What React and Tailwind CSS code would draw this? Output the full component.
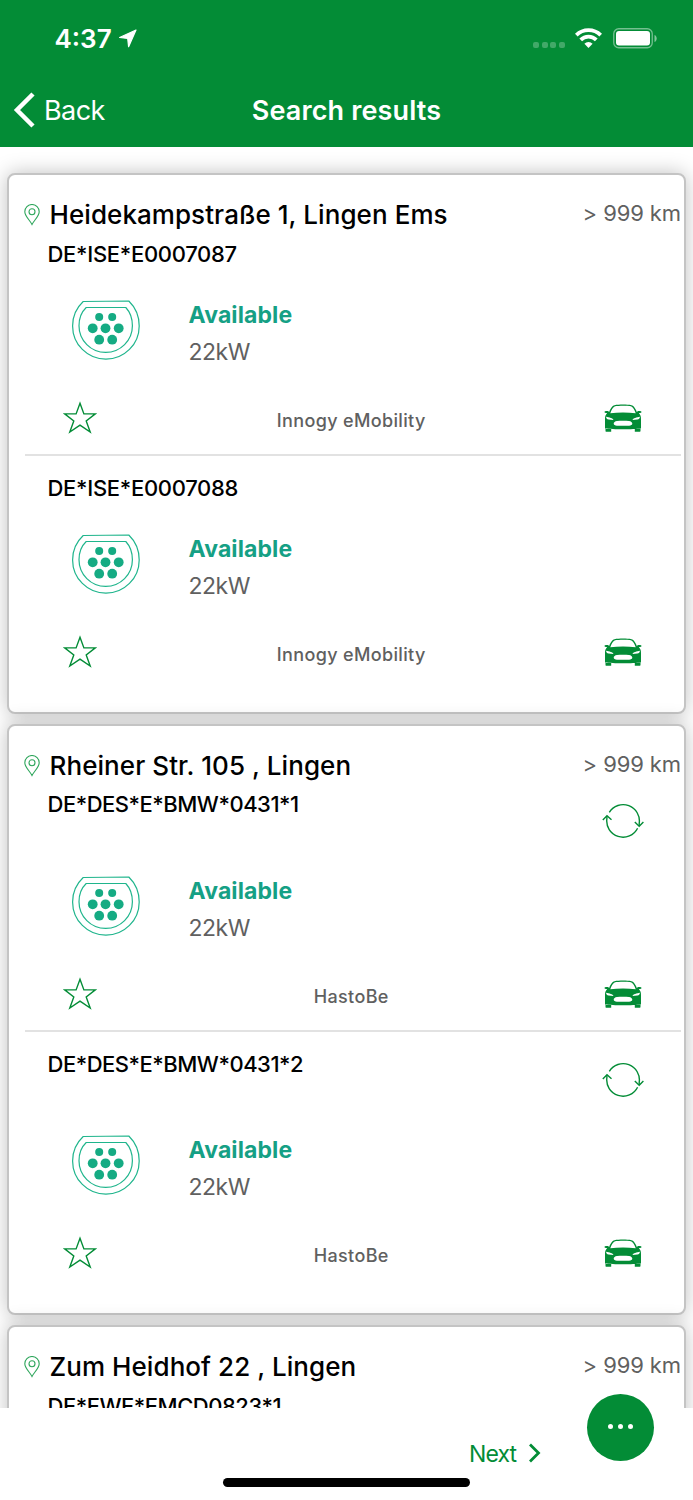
const locations = [
  {
    address: 'Heidekampstraße 1, Lingen Ems',
    distance: '> 999 km',
    stations: [
      { id: 'DE*ISE*E0007087', status: 'Available', power: '22kW', operator: 'Innogy eMobility' },
      { id: 'DE*ISE*E0007088', status: 'Available', power: '22kW', operator: 'Innogy eMobility' },
    ],
  },
  {
    address: 'Rheiner Str. 105 , Lingen',
    distance: '> 999 km',
    stations: [
      { id: 'DE*DES*E*BMW*0431*1', status: 'Available', power: '22kW', operator: 'HastoBe', roaming: true },
      { id: 'DE*DES*E*BMW*0431*2', status: 'Available', power: '22kW', operator: 'HastoBe', roaming: true },
    ],
  },
  {
    address: 'Zum Heidhof 22 , Lingen',
    distance: '> 999 km',
    stations: [{ id: 'DE*EWE*EMCD0823*1' }],
  },
];

function LocationArrow() {
  return (
    <svg width="18" height="19" viewBox="0 0 18 19" fill="#fff" stroke="#fff" strokeWidth="1.2" strokeLinejoin="round">
      <path d="M17 1 .6 8.500 8.700 9.500 9.600 17.700z" />
    </svg>
  );
}

function WifiIcon() {
  return (
    <svg width="27" height="20" viewBox="0 0 27 20" fill="none" stroke="#fff" strokeWidth="3.8">
      <path d="M1.3 7.1a17.3 17.3 0 0 1 24.4 0" />
      <path d="M5.7 11.8a11 11 0 0 1 15.6 0" />
      <path d="M13.5 20 9.4 15.8a5.8 5.8 0 0 1 8.2 0z" fill="#fff" stroke="none" />
    </svg>
  );
}

function BatteryIcon() {
  return (
    <svg width="44" height="21" viewBox="0 0 44 21" fill="none">
      <rect x="0.75" y="0.75" width="38.5" height="19" rx="5" stroke="#fff" strokeOpacity="0.45" strokeWidth="1.3" />
      <rect x="3" y="3" width="34" height="14.5" rx="3" fill="#fff" />
      <path d="M41.5 7v7c1.6-.6 2.2-2 2.2-3.5S43.1 7.6 41.5 7z" fill="#fff" fillOpacity="0.5" />
    </svg>
  );
}

function PinIcon() {
  return (
    <svg width="16" height="22" viewBox="0 0 16 22" fill="none" stroke="#2fa65c" strokeWidth="1.1">
      <path d="M8 20.500C6 16.500.8 12 .8 7.700a7.200 7.200 0 0 1 14.400 0C15.200 12 10 16.500 8 20.500z" />
      <circle cx="8" cy="7.700" r="3" />
    </svg>
  );
}

function PlugIcon() {
  return (
    <svg width="68" height="60" viewBox="0 0 68 60" fill="none" stroke="#1fb58c" strokeWidth="1.2">
      <path d="M11.200 1.500 56.800 1C63 7 67.200 15.500 67.200 25.900a33.300 33.300 0 0 1-66.600 0C.6 16 4.800 7.500 11.200 1.500z" />
      <path d="M14.200 7.500h39.600C58 12 60.400 18.500 60.400 25.700a26.700 26.700 0 0 1-53.400 0C7 18.500 9.500 12 14.200 7.500z" />
      <g fill="#15ab83" stroke="none">
        <circle cx="27.200" cy="17" r="4" />
        <circle cx="40.200" cy="17" r="4" />
        <circle cx="20.700" cy="28.300" r="4.900" />
        <circle cx="33.500" cy="28.300" r="4.900" />
        <circle cx="46.700" cy="28.300" r="4.900" />
        <circle cx="27.200" cy="39.700" r="4.900" />
        <circle cx="40.200" cy="39.700" r="4.900" />
      </g>
    </svg>
  );
}

function StarIcon() {
  return (
    <svg width="34" height="33" viewBox="0 0 34 33" fill="none" stroke="#038c36" strokeWidth="1.4">
      <path d="M17 2.200 20.900 12.900H32.300L23.200 19.900 27.200 31 17 24.100 6.800 31 10.800 19.900 1.700 12.900H13.100z" />
    </svg>
  );
}

function CarIcon() {
  return (
    <svg width="38" height="28" viewBox="0 0 38 28" fill="#038c36">
      <path
        fillRule="evenodd"
        d="M10.500 1.200C15 .4 23 .4 27.500 1.200c2.300.4 4.300 3.800 5.300 6.700l1.200-.8c1.500-.4 3.500-.1 3.500.9 0 .9-1.300 1.200-2.700 1.100 1.800 1.900 2.200 3.500 2.200 6v9.300c-8 1.100-28 1.100-36 0v-9.300c0-2.500.4-4.100 2.200-6C1.800 9.200.5 8.900.5 8c0-1 2-1.300 3.500-.9l1.200.8c1-2.900 3-6.300 5.300-6.700zM11 2.300C9 3 7.500 6 6.300 9.200c8-.8 17.400-.8 25.400 0C30.500 6 29 3 27 2.300c-4-.7-12-.7-16 0zM2 12.700c.3 1.500 1 2.600 2.600 2.900l4.800.3c-.3-1.700-4.200-2.600-7.400-3.200zm34 0c-3.200.6-7.100 1.500-7.400 3.200l4.800-.3c1.600-.3 2.300-1.400 2.600-2.900zM13 17c-2 .2-3.300 1.300-3.300 2.600s1.300 2.100 3.300 2.200h12c2-.1 3.300-.9 3.300-2.200S27 17.200 25 17c-3.500-.3-8.500-.3-12 0z"
      />
      <path d="M1.500 25h5.700v2.700H2.500c-.8 0-1-.4-1-1zM30.800 25h5.700v1.700c0 .6-.2 1-1 1h-4.700z" />
    </svg>
  );
}

function RoamingIcon() {
  return (
    <svg width="42" height="36" viewBox="0 0 42 36" fill="none" stroke="#038c36" strokeWidth="1.4">
      <path d="M7.300 9.300A16.300 16.300 0 0 1 37.200 20.500V23" />
      <path d="M35.600 25.200A16.300 16.300 0 0 1 4.900 15.500V13" />
      <path d="M32.800 19l4.400 4.200 4.200-4.200M.8 17l4.200-4.200 4.500 4" />
    </svg>
  );
}

function Station({ station, last }) {
  return (
    <div>
      <div className="h-[38px] flex items-center pl-[38.5px] text-[22px] font-medium">
        <span className={station.roaming || !station.status ? 'tracking-[-0.48px]' : 'tracking-[-0.3px]'}>
          {station.id}
        </span>
      </div>
      {station.roaming && (
        <div className="h-[25.25px] flex justify-end pr-[40px]">
          <div className="-mt-[21px]">
            <RoamingIcon />
          </div>
        </div>
      )}
      {station.status && (
        <div className="h-[114px] flex items-center pl-[63px]">
          <div className="-mt-px">
            <PlugIcon />
          </div>
          <div className="ml-[48.5px] pt-[7px] leading-[37px]">
            <div className="text-[23px] font-bold tracking-[0.1px] text-[#15a085]">{station.status}</div>
            <div className="text-[23px] tracking-[-0.5px] text-[#606060]">{station.power}</div>
          </div>
        </div>
      )}
      {station.operator && (
        <div className="h-[67px] grid grid-cols-[1fr_auto_1fr] items-center pl-[53.5px] pr-[42.5px]">
          <div className="-mt-[7px]">
            <StarIcon />
          </div>
          <div className="-ml-[1.5px] text-[18px] font-medium tracking-[0.35px] text-[#606060]">{station.operator}</div>
          <div className="flex justify-end -mt-[5px]">
            <CarIcon />
          </div>
        </div>
      )}
      {!last && <div className="h-[2px] ml-[15.5px] mr-[3px] mb-[13px] bg-[#e2e2e2]" />}
    </div>
  );
}

function LocationCard({ location }) {
  return (
    <section className="mx-[7px] mb-[9.75px] shrink-0 rounded-lg border-2 border-[#c4c4c4] bg-white pt-5 pb-6 shadow-[0_0_20px_rgba(0,0,0,0.25)]">
      <div className="h-10 flex items-center pl-[15px] pr-[3px]">
        <PinIcon />
        <h2 className="ml-[9.5px] -mt-px flex-1 text-[26px] font-medium tracking-[0.07px]">{location.address}</h2>
        <span className="-mt-[3px] text-[22px] tracking-[-0.1px] text-[#606060]">{location.distance}</span>
      </div>
      {location.stations.map((station, i) => (
        <Station key={station.id} station={station} last={i === location.stations.length - 1} />
      ))}
    </section>
  );
}

export default function App() {
  return (
    <div className="w-[693px] h-[1500px] flex flex-col overflow-hidden bg-white text-black font-['Inter',sans-serif]">
      <header className="h-[147.25px] shrink-0 bg-[#038c36] text-white">
        <div className="h-[76px] flex items-center justify-between pl-[54.5px] pr-[36px]">
          <div className="flex items-center gap-[7px] text-[26px] font-semibold">
            4:37
            <LocationArrow />
          </div>
          <div className="flex items-center">
            <div className="mt-[13px] mr-[10.5px] flex gap-[2.5px]">
              {[0, 1, 2, 3].map((n) => (
                <span key={n} className="size-[6px] rounded-[2px] bg-white/25" />
              ))}
            </div>
            <WifiIcon />
            <div className="ml-[11px]">
              <BatteryIcon />
            </div>
          </div>
        </div>
        <div className="h-[70px] grid grid-cols-[1fr_auto_1fr] items-center px-[13px]">
          <div className="flex items-center text-[27px]">
            <svg className="-mt-[3px]" width="22" height="36" viewBox="0 0 22 36" fill="none" stroke="#fff" strokeWidth="4.5">
              <path d="M20 2 4 18l16 16" />
            </svg>
            <span className="ml-[9px] tracking-[-0.6px]">Back</span>
          </div>
          <h1 className="text-[27px] font-semibold tracking-[0.13px]">Search results</h1>
        </div>
      </header>

      <main className="h-[1260.75px] shrink-0 overflow-hidden flex flex-col pt-[25.75px]">
        {locations.map((location) => (
          <LocationCard key={location.address} location={location} />
        ))}
      </main>

      <footer className="relative flex-1 bg-white">
        <button className="ml-[469px] mt-[30px] flex h-8 items-center text-[23px] tracking-[-0.9px] text-[#038c36]">
          <span className="pt-px">Next</span>
          <svg className="ml-[11.5px] -mt-[2px]" width="14" height="20" viewBox="0 0 14 20" fill="none" stroke="#038c36" strokeWidth="2.8">
            <path d="M2 1.500 10.500 10 2 18.500" />
          </svg>
        </button>
        <button className="absolute left-[587px] top-[-14px] flex size-[67px] items-center justify-center gap-[5px] rounded-full bg-[#038c36] pb-[3px]">
          <span className="size-[5px] rounded-full bg-white" />
          <span className="size-[5px] rounded-full bg-white" />
          <span className="size-[5px] rounded-full bg-white" />
        </button>
        <div className="absolute bottom-[13.5px] left-[223px] h-[8.5px] w-[247px] rounded-full bg-black" />
      </footer>
    </div>
  );
}
